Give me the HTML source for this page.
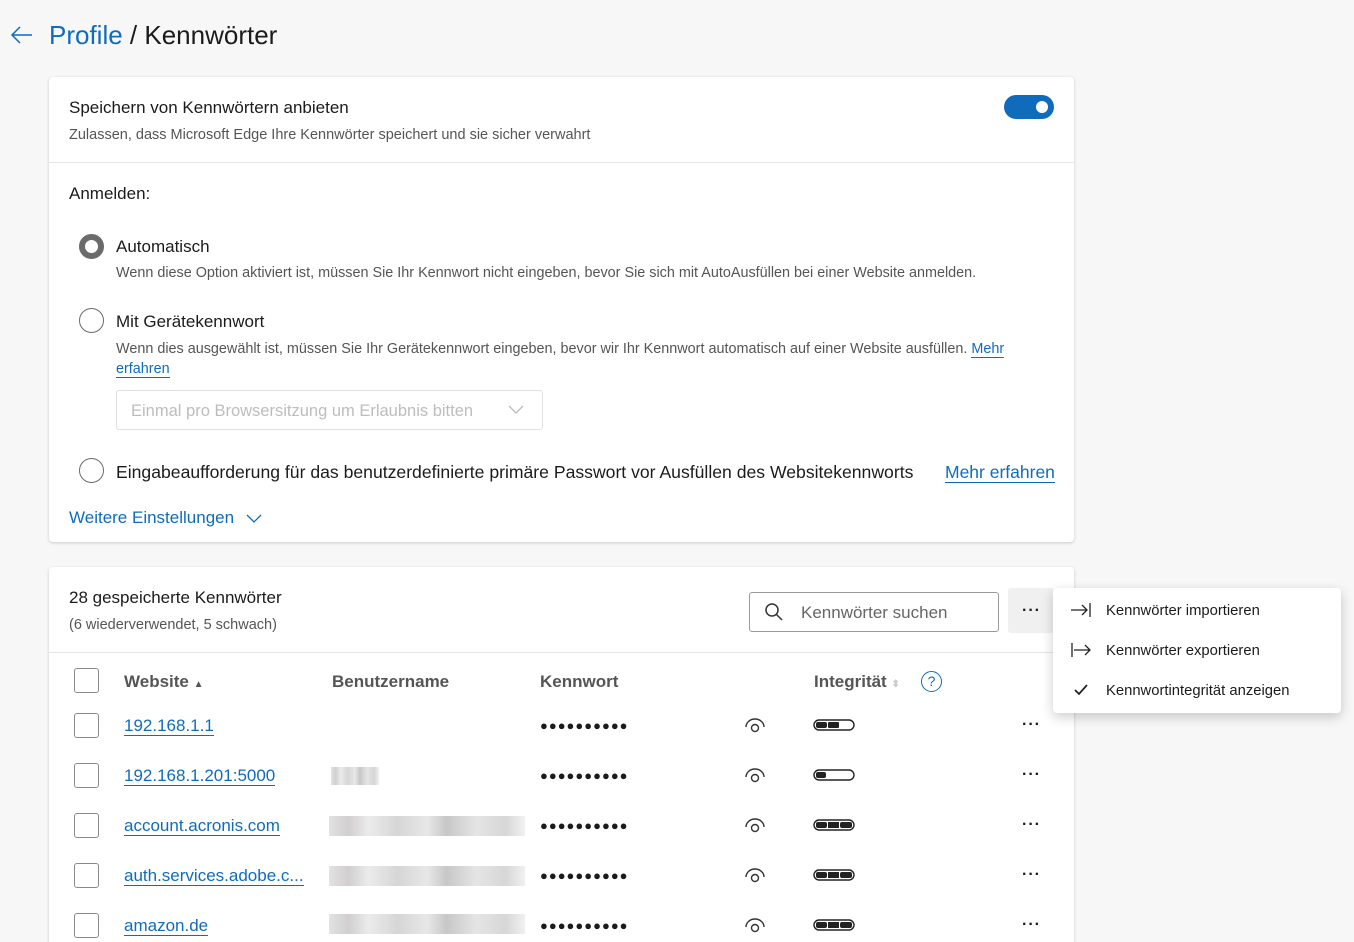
<!DOCTYPE html>
<html style="width:1354px;height:942px;overflow:hidden"><head><meta charset="utf-8"><style>
*{margin:0;padding:0;box-sizing:border-box}
body{width:1354px;height:942px;background:#f7f7f7;font-family:"Liberation Sans",sans-serif;color:#1b1b1b;position:relative;overflow:hidden}
.a{position:absolute;white-space:nowrap}
.card{position:absolute;background:#fff;border-radius:4px;box-shadow:0 1px 3px rgba(0,0,0,.18)}
.blue{color:#0f6cbd}
.link{color:#0f6cbd;border-bottom:1px solid #0f6cbd;line-height:18px}
.radio{position:absolute;width:25px;height:25px;border-radius:50%;border:1.5px solid #6b6b6b;background:#fff}
.cb{position:absolute;width:25px;height:25px;border:1.5px solid #8a8a8a;border-radius:3px;background:#fff}
.dots{position:absolute;font-size:13px;letter-spacing:1px;font-weight:bold}
.blur{position:absolute;height:20px;background:linear-gradient(90deg,#ddd,#c9c6c6 10%,#e8e8e8 20%,#cfcfcf 35%,#e3e3e3 50%,#bdbdbd 60%,#e0e0e0 75%,#d0d0d0 90%,#eee);opacity:.85}
.more{position:absolute;font-size:16px;font-weight:bold;letter-spacing:1px}
</style></head><body>
<svg class="a" style="left:10px;top:25px" width="24" height="20" viewBox="0 0 24 20"><path d="M22 10H2M10 2L2 10l8 8" fill="none" stroke="#0f6cbd" stroke-width="1.5"/></svg>
<div class="a" style="left:49px;top:20px;font-size:26px"><span class="blue">Profile</span> / Kennwörter</div>

<div class="card" style="left:49px;top:77px;width:1025px;height:465px">
  <div class="a" style="left:20px;top:21px;font-size:17px">Speichern von Kennwörtern anbieten</div>
  <div class="a" style="left:20px;top:50px;font-size:14.5px;color:#555">Zulassen, dass Microsoft Edge Ihre Kennwörter speichert und sie sicher verwahrt</div>
  <div class="a" style="left:955px;top:18px;width:50px;height:24px;border-radius:12px;background:#0f6cbd"><div style="position:absolute;right:6px;top:6px;width:12px;height:12px;border-radius:50%;background:#fff"></div></div>
  <div class="a" style="left:0;top:85px;width:1025px;height:1px;background:#e5e5e5"></div>
  <div class="a" style="left:20px;top:107px;font-size:17px">Anmelden:</div>
  <div class="radio" style="left:30px;top:157px;border:6px solid #6b6b6b"></div>
  <div class="a" style="left:67px;top:160px;font-size:17px">Automatisch</div>
  <div class="a" style="left:67px;top:188px;font-size:14.4px;color:#555">Wenn diese Option aktiviert ist, müssen Sie Ihr Kennwort nicht eingeben, bevor Sie sich mit AutoAusfüllen bei einer Website anmelden.</div>
  <div class="radio" style="left:30px;top:231px"></div>
  <div class="a" style="left:67px;top:235px;font-size:17px">Mit Gerätekennwort</div>
  <div class="a" style="left:67px;top:263px;font-size:14.4px;color:#555">Wenn dies ausgewählt ist, müssen Sie Ihr Gerätekennwort eingeben, bevor wir Ihr Kennwort automatisch auf einer Website ausfüllen. <span class="link">Mehr</span></div>
  <div class="a" style="left:67px;top:283px;font-size:14.4px"><span class="link">erfahren</span></div>
  <div class="a" style="left:67px;top:313px;width:427px;height:40px;border:1px solid #e0e0e0;border-radius:3px"></div>
  <div class="a" style="left:82px;top:325px;font-size:16.5px;color:#bdbdbd">Einmal pro Browsersitzung um Erlaubnis bitten</div>
  <svg class="a" style="left:459px;top:328px" width="16" height="10"><path d="M1 1l7 7 7-7" fill="none" stroke="#bdbdbd" stroke-width="1.3"/></svg>
  <div class="radio" style="left:30px;top:381px"></div>
  <div class="a" style="left:67px;top:385px;font-size:17.6px">Eingabeaufforderung für das benutzerdefinierte primäre Passwort vor Ausfüllen des Websitekennworts</div>
  <div class="a" style="left:896px;top:385px;font-size:17.5px"><span class="link" style="line-height:20px">Mehr erfahren</span></div>
  <div class="a blue" style="left:20px;top:431px;font-size:17px">Weitere Einstellungen</div>
  <svg class="a" style="left:197px;top:437px" width="16" height="10"><path d="M1 1l7 7 7-7" fill="none" stroke="#0f6cbd" stroke-width="1.3"/></svg>
</div>

<div class="card" style="left:49px;top:567px;width:1025px;height:400px">
  <div class="a" style="left:20px;top:21px;font-size:17px">28 gespeicherte Kennwörter</div>
  <div class="a" style="left:20px;top:50px;font-size:14.5px;color:#555">(6 wiederverwendet, 5 schwach)</div>
  <div class="a" style="left:700px;top:25px;width:250px;height:40px;border:1px solid #9a9a9a;border-radius:3px"></div>
  <svg class="a" style="left:715px;top:35px" width="20" height="20"><circle cx="8" cy="8" r="6" fill="none" stroke="#333" stroke-width="1.5"/><path d="M12.5 12.5L18 18" stroke="#333" stroke-width="1.5"/></svg>
  <div class="a" style="left:752px;top:36px;font-size:17px;color:#666">Kennwörter suchen</div>
  <div class="a" style="left:959px;top:21px;width:46px;height:45px;background:#f0f0f0;border-radius:3px"></div>
  <div class="more" style="left:973px;top:35px">···</div>
  <div class="a" style="left:0;top:85px;width:1025px;height:1px;background:#e5e5e5"></div>
  <div class="cb" style="left:25px;top:101px"></div>
  <div class="a" style="left:75px;top:105px;font-size:17px;font-weight:bold;color:#555">Website <span style="font-size:10px">▲</span></div>
  <div class="a" style="left:283px;top:105px;font-size:17px;font-weight:bold;color:#555">Benutzername</div>
  <div class="a" style="left:491px;top:105px;font-size:17px;font-weight:bold;color:#555">Kennwort</div>
  <div class="a" style="left:765px;top:105px;font-size:17px;font-weight:bold;color:#555">Integrität <span style="font-size:10px;color:#ccc">⬍</span></div>
  <div class="a" style="left:872px;top:104px;width:21px;height:21px;border:1.5px solid #0f6cbd;border-radius:50%;color:#0f6cbd;font-size:14px;text-align:center;line-height:18px">?</div>
</div>

<div class="cb" style="left:74px;top:713px"></div><div class="a" style="left:124px;top:716px;font-size:17px"><span class="link" style="line-height:20px">192.168.1.1</span></div>
<div class="cb" style="left:74px;top:763px"></div><div class="a" style="left:124px;top:766px;font-size:17px"><span class="link" style="line-height:20px">192.168.1.201:5000</span></div>
<div class="cb" style="left:74px;top:813px"></div><div class="a" style="left:124px;top:816px;font-size:17px"><span class="link" style="line-height:20px">account.acronis.com</span></div>
<div class="cb" style="left:74px;top:863px"></div><div class="a" style="left:124px;top:866px;font-size:17px"><span class="link" style="line-height:20px">auth.services.adobe.c...</span></div>
<div class="cb" style="left:74px;top:913px"></div><div class="a" style="left:124px;top:916px;font-size:17px"><span class="link" style="line-height:20px">amazon.de</span></div>

<div class="blur" style="left:331px;top:767px;width:48px;height:18px"></div>
<div class="blur" style="left:329px;top:816px;width:196px"></div>
<div class="blur" style="left:329px;top:866px;width:196px"></div>
<div class="blur" style="left:329px;top:914px;width:196px"></div>

<div class="dots" style="left:540px;top:718px">●●●●●●●●●●</div>
<div class="dots" style="left:540px;top:768px">●●●●●●●●●●</div>
<div class="dots" style="left:540px;top:818px">●●●●●●●●●●</div>
<div class="dots" style="left:540px;top:868px">●●●●●●●●●●</div>
<div class="dots" style="left:540px;top:918px">●●●●●●●●●●</div>

<svg class="a" style="left:744px;top:718px" width="22" height="16"><path d="M2 9a9 8 0 0 1 18 0" fill="none" stroke="#333" stroke-width="1.4"/><circle cx="11" cy="10" r="3.5" fill="none" stroke="#333" stroke-width="1.4"/></svg>
<svg class="a" style="left:744px;top:768px" width="22" height="16"><path d="M2 9a9 8 0 0 1 18 0" fill="none" stroke="#333" stroke-width="1.4"/><circle cx="11" cy="10" r="3.5" fill="none" stroke="#333" stroke-width="1.4"/></svg>
<svg class="a" style="left:744px;top:818px" width="22" height="16"><path d="M2 9a9 8 0 0 1 18 0" fill="none" stroke="#333" stroke-width="1.4"/><circle cx="11" cy="10" r="3.5" fill="none" stroke="#333" stroke-width="1.4"/></svg>
<svg class="a" style="left:744px;top:868px" width="22" height="16"><path d="M2 9a9 8 0 0 1 18 0" fill="none" stroke="#333" stroke-width="1.4"/><circle cx="11" cy="10" r="3.5" fill="none" stroke="#333" stroke-width="1.4"/></svg>
<svg class="a" style="left:744px;top:918px" width="22" height="16"><path d="M2 9a9 8 0 0 1 18 0" fill="none" stroke="#333" stroke-width="1.4"/><circle cx="11" cy="10" r="3.5" fill="none" stroke="#333" stroke-width="1.4"/></svg>

<svg class="a" style="left:813px;top:719px" width="42" height="12"><rect x="1" y="1" width="40" height="10" rx="5" fill="none" stroke="#222" stroke-width="1.4"/><rect x="3" y="3" width="11" height="6" rx="2" fill="#222"/><rect x="15" y="3" width="11" height="6" rx="1" fill="#222"/></svg>
<svg class="a" style="left:813px;top:769px" width="42" height="12"><rect x="1" y="1" width="40" height="10" rx="5" fill="none" stroke="#222" stroke-width="1.4"/><rect x="3" y="3" width="10" height="6" rx="2" fill="#222"/></svg>
<svg class="a" style="left:813px;top:819px" width="42" height="12"><rect x="1" y="1" width="40" height="10" rx="5" fill="none" stroke="#222" stroke-width="1.4"/><rect x="3" y="3" width="11" height="6" rx="2" fill="#222"/><rect x="15" y="3" width="11" height="6" fill="#222"/><rect x="27" y="3" width="12" height="6" rx="2" fill="#222"/></svg>
<svg class="a" style="left:813px;top:869px" width="42" height="12"><rect x="1" y="1" width="40" height="10" rx="5" fill="none" stroke="#222" stroke-width="1.4"/><rect x="3" y="3" width="11" height="6" rx="2" fill="#222"/><rect x="15" y="3" width="11" height="6" fill="#222"/><rect x="27" y="3" width="12" height="6" rx="2" fill="#222"/></svg>
<svg class="a" style="left:813px;top:919px" width="42" height="12"><rect x="1" y="1" width="40" height="10" rx="5" fill="none" stroke="#222" stroke-width="1.4"/><rect x="3" y="3" width="11" height="6" rx="2" fill="#222"/><rect x="15" y="3" width="11" height="6" fill="#222"/><rect x="27" y="3" width="12" height="6" rx="2" fill="#222"/></svg>

<div class="more" style="left:1022px;top:716px">···</div>
<div class="more" style="left:1022px;top:766px">···</div>
<div class="more" style="left:1022px;top:816px">···</div>
<div class="more" style="left:1022px;top:866px">···</div>
<div class="more" style="left:1022px;top:916px">···</div>

<div class="a" style="left:1053px;top:588px;width:288px;height:125px;background:#fff;border-radius:4px;box-shadow:0 4px 12px rgba(0,0,0,.2)">
  <svg class="a" style="left:17px;top:14px" width="22" height="16"><path d="M1 8h16M12 3l5 5-5 5M20 1v14" fill="none" stroke="#222" stroke-width="1.3"/></svg>
  <div class="a" style="left:53px;top:15px;font-size:14.8px">Kennwörter importieren</div>
  <svg class="a" style="left:17px;top:54px" width="22" height="16"><path d="M2 1v14M4 8h16M15 3l5 5-5 5" fill="none" stroke="#222" stroke-width="1.3"/></svg>
  <div class="a" style="left:53px;top:55px;font-size:14.8px">Kennwörter exportieren</div>
  <svg class="a" style="left:21px;top:96px" width="14" height="12"><path d="M1 6l4 4 8-9" fill="none" stroke="#222" stroke-width="1.8"/></svg>
  <div class="a" style="left:53px;top:95px;font-size:14.8px">Kennwortintegrität anzeigen</div>
</div>
</body></html>
